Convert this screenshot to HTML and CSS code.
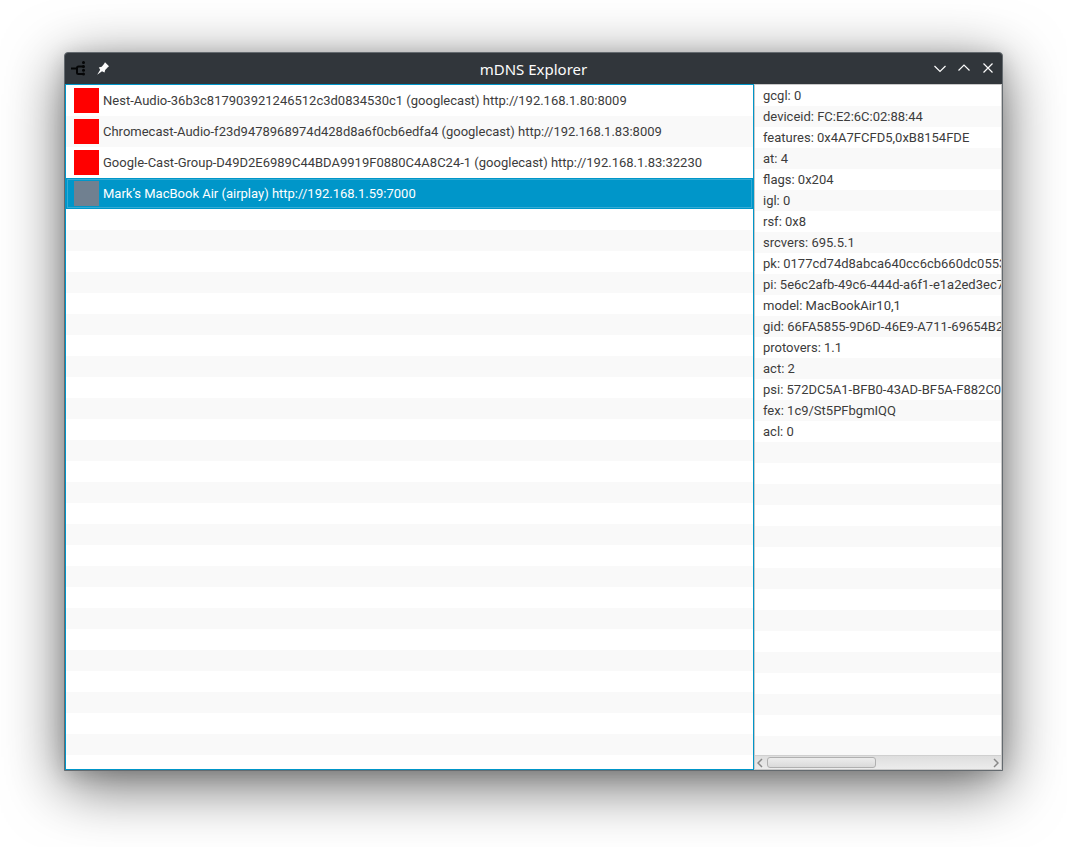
FILE: index.html
```html
<!DOCTYPE html>
<html lang="en">
<head>
<meta charset="utf-8">
<title>mDNS Explorer</title>
<link rel="stylesheet" href="styles.css">
</head>
<body>
<main class="window">
  <header class="titlebar">
    <div class="titlebar-side">
      <svg class="app-icon" viewBox="0 0 16 16" width="16" height="16" aria-hidden="true">
        <path d="M0 7.500H6M13 5.500H7.500Q6 5.500 6 7V11.500Q6 13 7.500 13H13" fill="none" stroke="#050607" stroke-width="2"/>
        <g fill="#050607"><circle cx="12.500" cy="1.500" r="1.500"/><circle cx="12.500" cy="5.500" r="1.500"/><circle cx="12.500" cy="9.300" r="1.500"/><circle cx="12.500" cy="13" r="1.500"/></g>
      </svg>
      <button class="title-button" type="button" aria-label="Pin">
        <svg viewBox="0 0 16 16" width="16" height="16"><path d="M10 1.300L14 5.300L12.800 6.300L10.200 9L9.500 11.500L7 10.200L2.200 13.800L5.200 8.700L3.800 6.500L6.700 5.700L9 3Z" fill="#fcfcfc"/></svg>
      </button>
    </div>
    <h1 class="title">mDNS Explorer</h1>
    <div class="titlebar-side titlebar-end">
      <button class="title-button" type="button" aria-label="Minimize">
        <svg viewBox="0 0 16 16" width="16" height="16"><path d="M2.500 5L8 10.500L13.500 5"/></svg>
      </button>
      <button class="title-button" type="button" aria-label="Maximize">
        <svg viewBox="0 0 16 16" width="16" height="16"><path d="M2.500 9.500L8 4L13.500 9.500"/></svg>
      </button>
      <button class="title-button" type="button" aria-label="Close">
        <svg viewBox="0 0 16 16" width="16" height="16"><path d="M3.500 2.500L12.500 11.500M12.500 2.500L3.500 11.500"/></svg>
      </button>
    </div>
  </header>
  <div class="content">
    <section class="services" aria-label="Services">
      <ul class="service-list">
        <li class="service"><span class="swatch"></span>Nest-Audio-36b3c817903921246512c3d0834530c1 (googlecast) http://192.168.1.80:8009</li>
        <li class="service"><span class="swatch"></span>Chromecast-Audio-f23d9478968974d428d8a6f0cb6edfa4 (googlecast) http://192.168.1.83:8009</li>
        <li class="service"><span class="swatch"></span>Google-Cast-Group-D49D2E6989C44BDA9919F0880C4A8C24-1 (googlecast) http://192.168.1.83:32230</li>
        <li class="service selected"><span class="swatch airplay"></span>Mark’s MacBook Air (airplay) http://192.168.1.59:7000</li>
      </ul>
      <div class="stripes"></div>
    </section>
    <section class="details" aria-label="Details">
      <ul class="attribute-list">
        <li>gcgl: 0</li>
        <li>deviceid: FC:E2:6C:02:88:44</li>
        <li>features: 0x4A7FCFD5,0xB8154FDE</li>
        <li>at: 4</li>
        <li>flags: 0x204</li>
        <li>igl: 0</li>
        <li>rsf: 0x8</li>
        <li>srcvers: 695.5.1</li>
        <li>pk: 0177cd74d8abca640cc6cb660dc0553</li>
        <li>pi: 5e6c2afb-49c6-444d-a6f1-e1a2ed3ec7</li>
        <li>model: MacBookAir10,1</li>
        <li>gid: 66FA5855-9D6D-46E9-A711-69654B2</li>
        <li>protovers: 1.1</li>
        <li>act: 2</li>
        <li>psi: 572DC5A1-BFB0-43AD-BF5A-F882C0</li>
        <li>fex: 1c9/St5PFbgmIQQ</li>
        <li>acl: 0</li>
      </ul>
      <div class="stripes stripes-odd"></div>
      <div class="scrollbar">
        <button class="scroll-button" type="button" aria-label="Scroll left">
          <svg viewBox="0 0 6 10" width="6" height="10"><path d="M5 1L1 5L5 9"/></svg>
        </button>
        <div class="track"><div class="thumb"></div></div>
        <button class="scroll-button" type="button" aria-label="Scroll right">
          <svg viewBox="0 0 6 10" width="6" height="10"><path d="M1 1L5 5L1 9"/></svg>
        </button>
      </div>
    </section>
  </div>
</main>
</body>
</html>
```
FILE: styles.css
```css
* {
  box-sizing: border-box;
}

body {
  display: flex;
  min-height: 100vh;
  margin: 0;
  padding: 52px 64px 76px;
  background: #fff;
  color: #3c3c3c;
  font: 13px/21px Roboto, sans-serif;
}

.window {
  display: flex;
  flex: 1;
  flex-direction: column;
  min-width: 0;
  border: 1px solid #646a6f;
  border-radius: 4px 4px 0 0;
  background: #31363b;
  box-shadow: 0 14px 60px rgba(0, 0, 0, 0.6), 0 4px 20px rgba(0, 0, 0, 0.15);
}

.titlebar {
  display: grid;
  grid-template-columns: 1fr auto 1fr;
  align-items: center;
  height: 31px;
  padding: 0 6px;
}

.titlebar-side {
  display: flex;
  gap: 8px;
}

.titlebar-end {
  justify-content: flex-end;
}

.title {
  margin: 0;
  color: #fcfcfc;
  font: 15px/20px "Noto Sans", sans-serif;
}

.title-button,
.scroll-button {
  display: block;
  padding: 0;
  border: 0;
  background: none;
}

.title-button svg,
.app-icon,
.scroll-button svg {
  display: block;
}

.titlebar-end path {
  fill: none;
  stroke: #fcfcfc;
  stroke-width: 1.2;
}

.content {
  display: grid;
  flex: 1;
  grid-template-columns: minmax(0, 689fr) minmax(0, 248fr);
}

.services,
.details {
  display: flex;
  flex-direction: column;
  min-width: 0;
  border: 1px solid #0096c9;
  background: #fff;
  white-space: nowrap;
  overflow: hidden;
}

.details {
  border-color: #c8c8c8;
}

.service-list,
.attribute-list {
  margin: 0;
  padding: 0;
  list-style: none;
}

.service {
  display: flex;
  align-items: center;
  gap: 4px;
  height: 31px;
  padding: 0 8px;
}

.service:nth-child(even),
.attribute-list li:nth-child(even) {
  background: #f9f9f9;
}

.service.selected {
  outline: 1px solid #33abd4;
  outline-offset: -2px;
  background: #0096c9;
  color: #fff;
}

.swatch {
  width: 25px;
  height: 25px;
  background: #f00;
}

.swatch.airplay {
  background: #708090;
}

.attribute-list li {
  height: 21px;
  padding: 0 8px;
}

.stripes {
  flex: 1;
  background: repeating-linear-gradient(#fff 0 21px, #f9f9f9 21px 42px);
}

.stripes-odd {
  background: repeating-linear-gradient(#f9f9f9 0 21px, #fff 21px 42px);
}

.scrollbar {
  display: flex;
  align-items: center;
  gap: 4px;
  height: 14px;
  padding: 0 2px;
  border-top: 1px solid #d0d0d0;
  background: linear-gradient(#dedede, #ececec);
}

.scroll-button path {
  fill: none;
  stroke: #888;
  stroke-width: 1.5;
}

.track {
  flex: 1;
}

.thumb {
  width: 49%;
  height: 11px;
  border: 1px solid #b0b0b0;
  border-radius: 3px;
  background: linear-gradient(#ededed, #dadada);
}
```
